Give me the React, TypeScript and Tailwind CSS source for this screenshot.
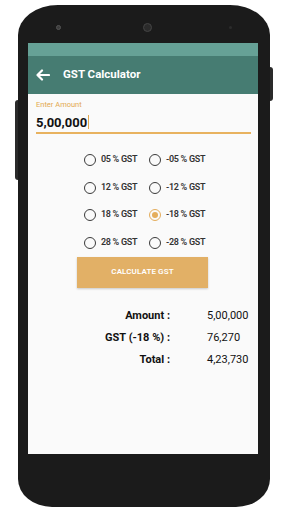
import React, { useState } from 'react';

const options = [
    ['05 % GST', '-05 % GST'],
    ['12 % GST', '-12 % GST'],
    ['18 % GST', '-18 % GST'],
    ['28 % GST', '-28 % GST'],
];

function Radio({ checked }: { checked: boolean }) {
    return (
        <span
            className={`w-[12px] h-[12px] rounded-full border-[1.5px] flex items-center justify-center shrink-0 ${checked ? 'border-[#e4ad5c]' : 'border-[#3a3a3a]'}`}
        >
            {checked && <span className="w-[6px] h-[6px] rounded-full bg-[#e4ad5c]" />}
        </span>
    );
}

export default function App() {
    const [selected, setSelected] = useState('-18 % GST');

    return (
        <div className="w-[288px] h-[512px] bg-white overflow-hidden font-['Roboto',sans-serif] pt-[5px] pl-[18px]">
            {/* Phone body */}
            <div className="relative w-[252px] h-[502px] bg-[#1b1b1b] rounded-t-[40px_30px] rounded-b-[34px_28px] pt-[38px] pl-[10px]">
                {/* side buttons */}
                <div className="absolute left-[-3px] top-[95px] w-[3px] h-[80px] bg-[#2a2a2a] rounded-l-sm" />
                <div className="absolute right-[-3px] top-[62px] w-[3px] h-[34px] bg-[#2a2a2a] rounded-r-sm" />

                {/* earpiece / camera */}
                <div className="absolute top-[18px] left-0 right-0 flex items-center justify-between px-[38px]">
                    <span className="w-[5px] h-[5px] rounded-full bg-[#3b3b3b] border border-[#555]" />
                    <span className="w-[9px] h-[9px] rounded-full bg-[#2b2b2b] border-[1.5px] border-[#444] ml-[4px]" />
                    <span className="w-[3px] h-[3px] rounded-full bg-[#2c2c2c]" />
                </div>

                {/* Screen */}
                <div className="w-[230px] h-[411px] bg-[#fafafa] flex flex-col">
                    <div className="h-[13px] bg-[#66a196]" />
                    <div className="h-[38px] bg-[#467c72] flex items-center pl-[8px] gap-[13px]">
                        <svg width="14" height="12" viewBox="0 0 14 12" fill="none" stroke="white" strokeWidth="2.2" strokeLinecap="round" strokeLinejoin="round">
                            <path d="M13 6H1.5M6 1.5L1.5 6L6 10.5" />
                        </svg>
                        <span className="text-white font-bold text-[11.5px]">GST Calculator</span>
                    </div>

                    {/* Input */}
                    <div className="pl-[8px] pr-[7px] pt-[7px]">
                        <div className="text-[7.5px] text-[#e3a94f] leading-[8px]">Enter Amount</div>
                        <div className="flex items-center h-[22px] mt-[3px] border-b-2 border-[#e8b25f]">
                            <span className="text-[13px] font-bold text-[#111] leading-none">5,00,000</span>
                            <span className="w-[1px] h-[14px] bg-[#e3a94f] ml-[1px]" />
                        </div>
                    </div>

                    {/* Radio grid */}
                    <div className="grid grid-cols-[65px_auto] ml-[56px] mt-[20px] gap-y-[15.5px]">
                        {options.flat().map((label) => (
                            <button
                                key={label}
                                type="button"
                                onClick={() => setSelected(label)}
                                className="flex items-center gap-[5px] h-[12px] text-left"
                            >
                                <Radio checked={selected === label} />
                                <span className="text-[9px] font-semibold text-[#333] tracking-[-0.3px]">{label}</span>
                            </button>
                        ))}
                    </div>

                    {/* Calculate */}
                    <button
                        type="button"
                        className="ml-[49px] mt-[8px] w-[131px] h-[31px] bg-[#e2b066] text-white text-[8px] font-semibold tracking-[0.1px] shadow-[0_1px_2px_rgba(0,0,0,0.2)]"
                    >
                        CALCULATE GST
                    </button>

                    {/* Results */}
                    <div className="grid grid-cols-[142px_auto] gap-x-[37px] gap-y-[9px] mt-[21px] text-[11px] leading-[13px] text-[#111]">
                        <span className="text-right font-bold">Amount :</span>
                        <span>5,00,000</span>
                        <span className="text-right font-bold">GST (-18 %) :</span>
                        <span>76,270</span>
                        <span className="text-right font-bold">Total :</span>
                        <span>4,23,730</span>
                    </div>
                </div>
            </div>
        </div>
    );
}
